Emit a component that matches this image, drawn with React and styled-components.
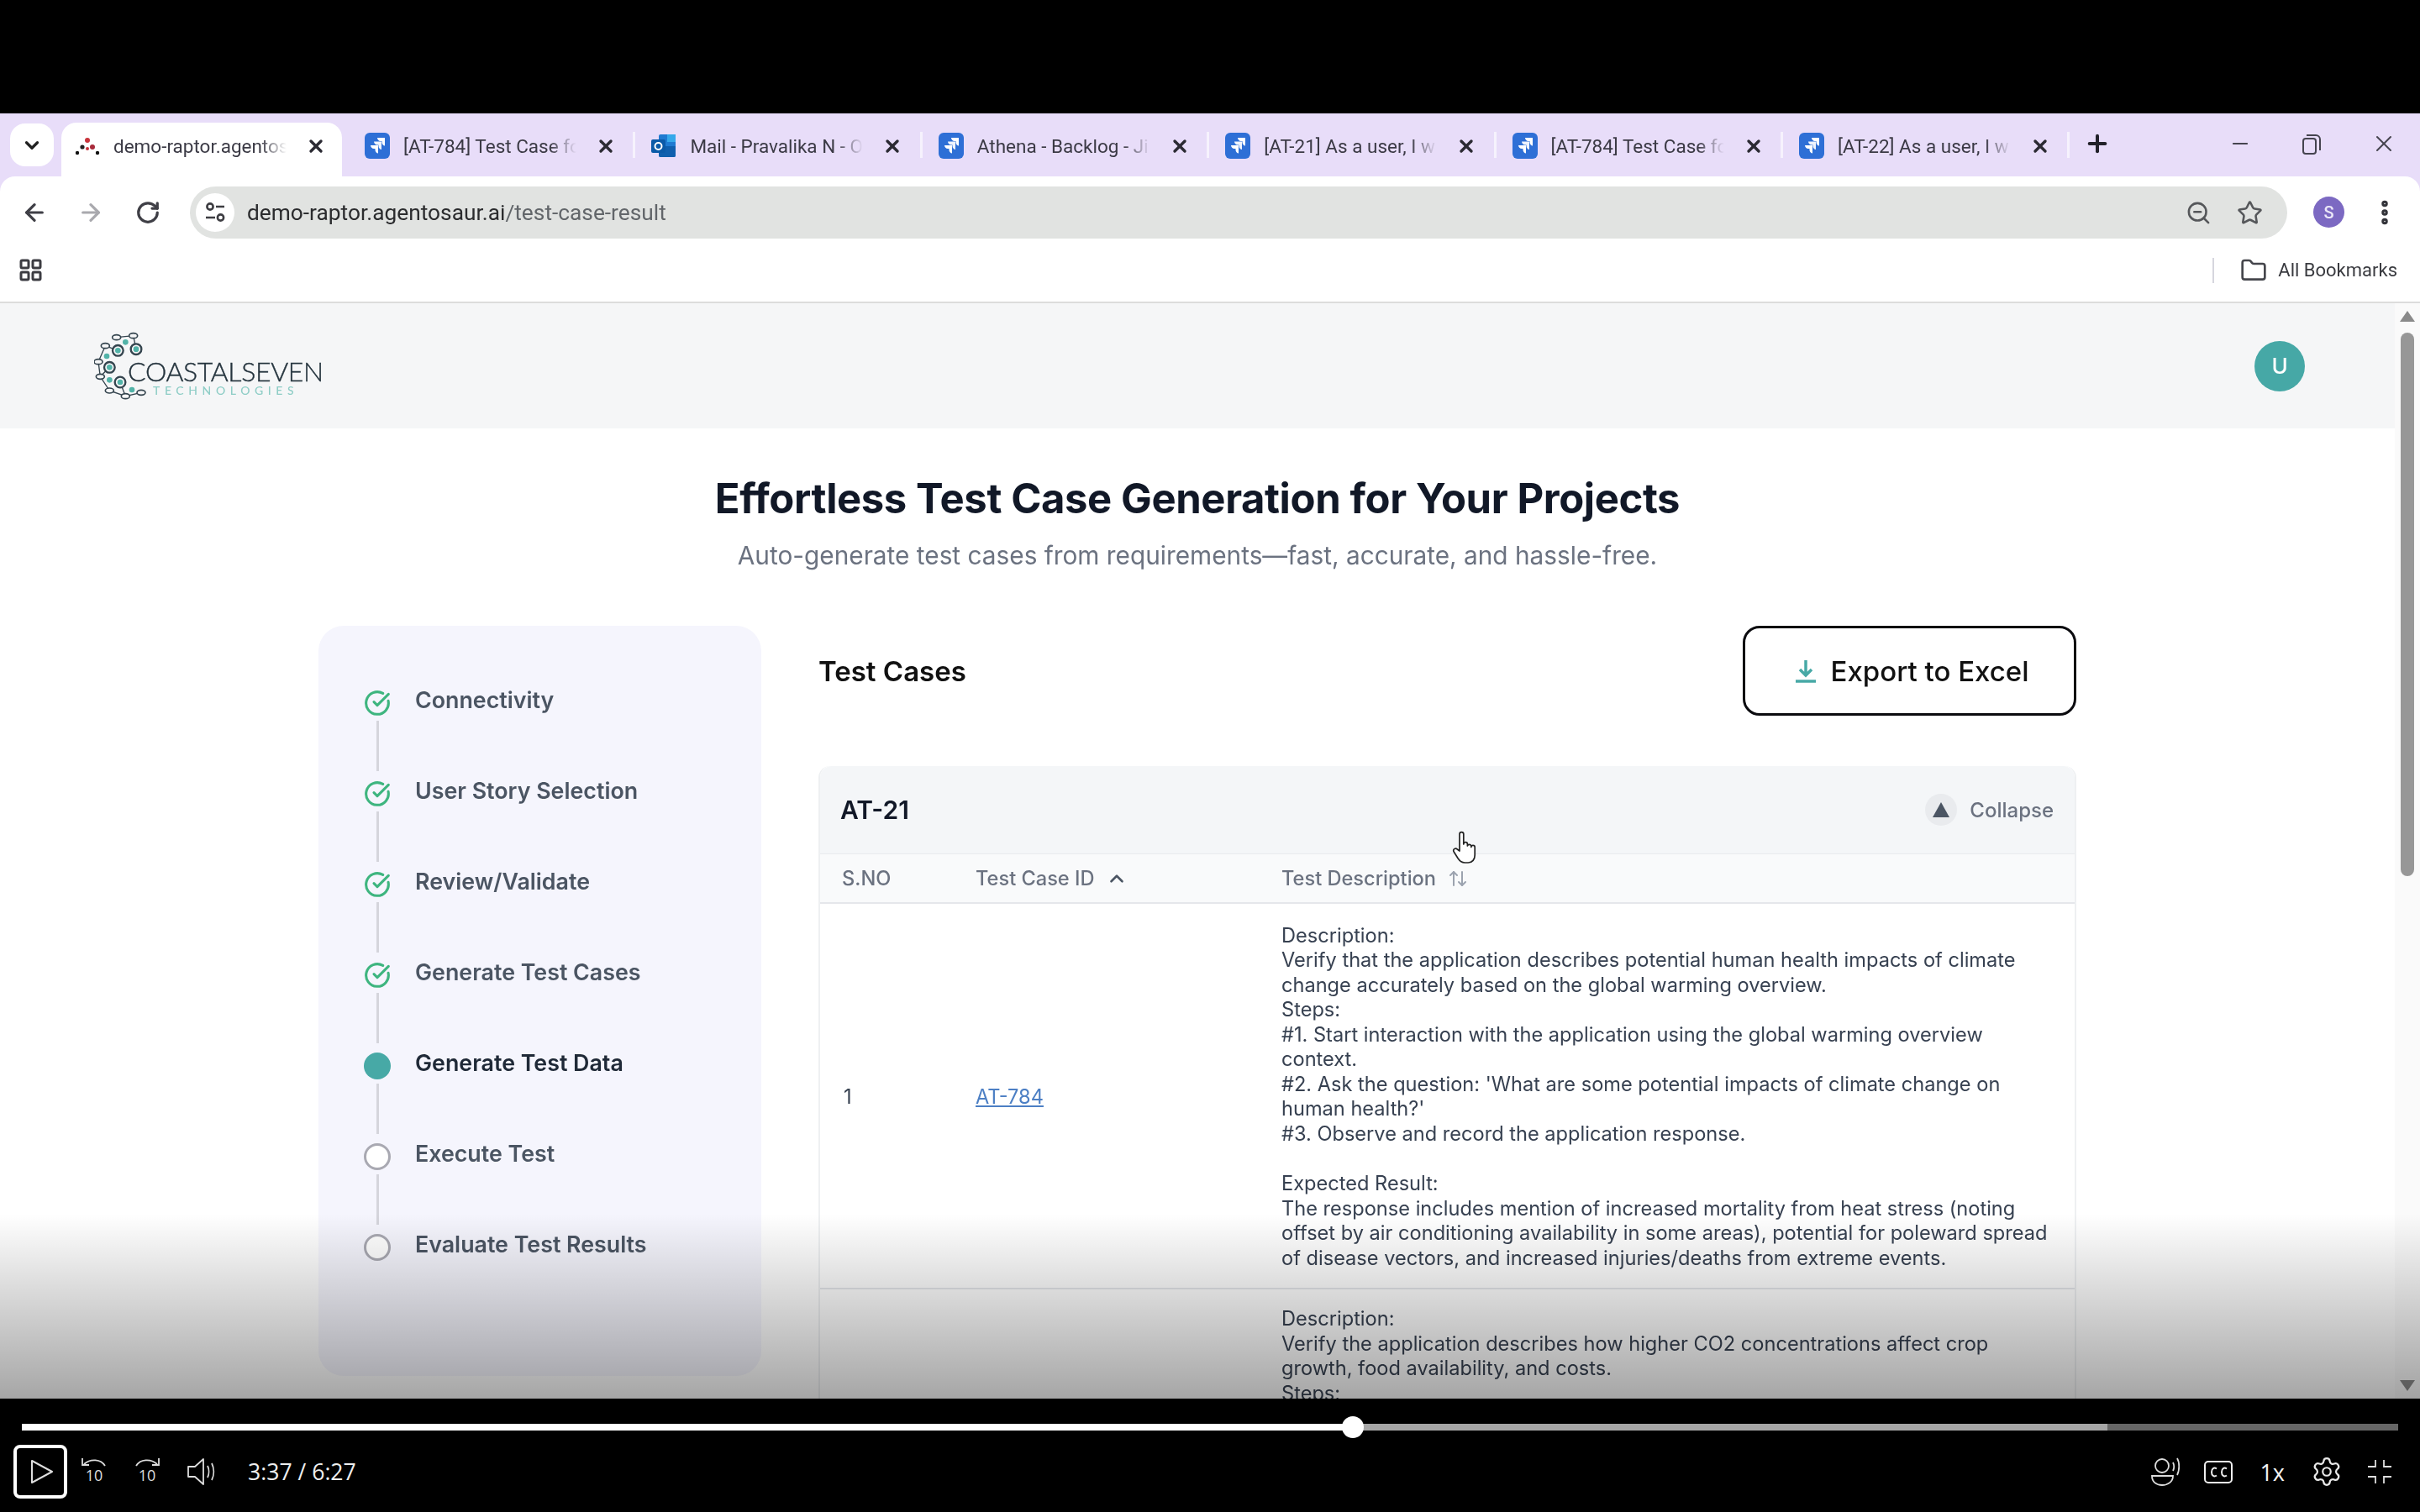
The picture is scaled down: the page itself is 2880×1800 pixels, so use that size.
import React from "react";
import styled, { createGlobalStyle } from "styled-components";
import {
  ArrowLeft,
  ArrowRight,
  ArrowUpDown,
  ChevronDown,
  ChevronUp,
  CircleCheckBig,
  EllipsisVertical,
  Folder,
  Minus,
  Plus,
  RotateCw,
  Settings,
  Star,
  X,
  ZoomOut,
} from "lucide-react";

const Global = createGlobalStyle`
  html, body { margin: 0; padding: 0; background: #000; }
  body { font-family: Inter, "Liberation Sans", sans-serif; overflow: hidden; }
  * { box-sizing: border-box; }
`;

const Screen = styled.div`
  width: 2880px;
  height: 1800px;
  display: flex;
  flex-direction: column;
  background: #000;
  overflow: hidden;
`;

const TopBlack = styled.div`
  height: 135px;
  flex: none;
`;

// the recording is a soft video frame, the player controls on top of it are sharp
const VideoFrame = styled.div`
  flex: none;
  background: #e8ddf9;
  filter: blur(0.6px);
`;

const Strip = styled.div`
  height: 75px;
  display: flex;
  align-items: flex-end;
  background: #e8ddf9;
  padding-left: 12px;
  font-family: Roboto, sans-serif;
`;

const ListBtn = styled.div`
  width: 52px;
  height: 51px;
  margin: 0 9px 12px 0;
  border-radius: 18px;
  background: #fff;
  display: flex;
  align-items: center;
  justify-content: center;
  color: #222;
`;

const Tab = styled.div`
  position: relative;
  flex: none;
  width: ${(p) => (p.$active ? "334px" : "341.4px")};
  height: 64px;
  margin-right: ${(p) => (p.$active ? "8px" : "0")};
  padding: 0 0 9px ${(p) => (p.$active ? "16px" : "19px")};
  display: flex;
  align-items: center;
  gap: 16px;
  background: ${(p) => (p.$active ? "#fff" : "transparent")};
  border-radius: 18px 18px 0 0;
  color: #3b3a45;
  &::after {
    content: "";
    display: ${(p) => (p.$active ? "none" : "block")};
    position: absolute;
    right: 0;
    top: 11px;
    width: 3px;
    height: 31px;
    background: #f6f2fd;
  }
`;

const TabTitle = styled.span`
  width: 208px;
  white-space: nowrap;
  font-size: 22.5px;
  -webkit-mask-image: linear-gradient(to right, #000 84%, transparent 99%);
  mask-image: linear-gradient(to right, #000 84%, transparent 99%);
`;

const TabClose = styled.span`
  display: flex;
  margin-left: 5px;
  color: #2b2a33;
`;

const NewTab = styled.div`
  display: flex;
  align-self: center;
  margin: -4px 0 0 17px;
  color: #22212a;
`;

const WinControls = styled.div`
  margin-left: auto;
  align-self: center;
  display: flex;
  align-items: center;
  gap: 58.5px;
  padding-right: 27px;
  margin-top: -4px;
  color: #45444f;
`;

const Toolbar = styled.div`
  height: 74px;
  background: #fff;
  border-radius: 18px 18px 0 0;
  display: flex;
  align-items: flex-start;
  padding: 12px 23px 0 0;
`;

const NavIcon = styled.div`
  width: ${(p) => p.$w}px;
  height: 62px;
  display: flex;
  align-items: center;
  justify-content: center;
  color: ${(p) => p.$color || "#3f3f46"};
  flex: none;
`;

const Pill = styled.div`
  flex: none;
  width: 2496px;
  height: 62px;
  border-radius: 31px;
  background: #e1e3e1;
  display: flex;
  align-items: center;
  padding: 0 29px 0 7px;
  font-family: Roboto, sans-serif;
`;

const SiteInfo = styled.div`
  width: 46px;
  height: 46px;
  border-radius: 50%;
  background: #fff;
  display: flex;
  align-items: center;
  justify-content: center;
  margin-right: 15px;
`;

const UrlHost = styled.span`
  font-size: 26.3px;
  color: #2b2c2e;
`;

const UrlPath = styled.span`
  font-size: 26.3px;
  color: #62666a;
`;

const PillIcons = styled.div`
  margin-left: auto;
  display: flex;
  align-items: center;
  gap: 30px;
  color: #55575a;
`;

const ProfileDot = styled.div`
  width: 37px;
  height: 37px;
  border-radius: 50%;
  background: #7c69c2;
  color: #ece8f8;
  font: 500 20px Roboto, sans-serif;
  display: flex;
  align-items: center;
  justify-content: center;
  margin-left: 31px;
  margin-top: 12px;
  flex: none;
`;

const ToolMenu = styled.div`
  display: flex;
  margin: 13px 0 0 30px;
  color: #33343a;
`;

const BookmarkBar = styled.div`
  height: 77px;
  background: #fff;
  border-bottom: 2px solid #dcdcdc;
  display: flex;
  align-items: center;
  padding: 0 27px 0 23px;
  font-family: Roboto, sans-serif;
`;

const BookmarkSep = styled.div`
  width: 2px;
  height: 30px;
  background: #d6d6de;
  margin-left: auto;
  margin-right: 31px;
`;

const BookmarkText = styled.span`
  font-size: 22px;
  color: #3a3b40;
  margin-left: 13px;
`;

const PageWrap = styled.div`
  position: relative;
  height: 1304px;
  display: flex;
  background: #fff;
  overflow: hidden;
`;

const Page = styled.div`
  width: 2850px;
  flex: none;
`;

const Header = styled.header`
  height: 149px;
  background: #f5f6f7;
  display: flex;
  align-items: center;
  justify-content: space-between;
  padding: 0 107px 0 112px;
`;

const LogoWrap = styled.div`
  display: flex;
  align-items: flex-start;
`;

const LogoWords = styled.div`
  margin: 31px 0 0 -26px;
  display: flex;
  flex-direction: column;
`;

const LogoMain = styled.span`
  font: 300 32px/32px Lato, sans-serif;
  letter-spacing: -0.35px;
  color: #25343e;
  -webkit-text-stroke: 0.4px #25343e;
`;

const LogoSub = styled.span`
  margin: -1px 0 0 30px;
  font: 500 14px/16px Lato, sans-serif;
  letter-spacing: 5.6px;
  color: #8ecdc6;
`;

const Avatar = styled.div`
  width: 60px;
  height: 60px;
  border-radius: 50%;
  background: #46a8a6;
  color: #fff;
  font-size: 26px;
  font-weight: 500;
  display: flex;
  align-items: center;
  justify-content: center;
`;

const Title = styled.h1`
  margin: 54px 0 0;
  text-align: center;
  font-size: 49px;
  line-height: 60px;
  font-weight: 700;
  letter-spacing: -0.4px;
  color: #111827;
`;

const Subtitle = styled.p`
  margin: 17px 0 0;
  text-align: center;
  font-size: 29.8px;
  line-height: 40px;
  color: #6b7280;
`;

const Columns = styled.div`
  width: 2092px;
  margin: 64px auto 0;
  display: flex;
  gap: 68px;
  align-items: flex-start;
`;

const Sidebar = styled.aside`
  width: 527px;
  height: 893px;
  flex: none;
  background: #f5f5fd;
  border-radius: 30px;
  padding: 71px 0 0 54px;
`;

const Step = styled.div`
  display: flex;
  gap: 29px;
`;

const Rail = styled.div`
  width: 32px;
  padding-top: 5px;
  display: flex;
  flex-direction: column;
  align-items: center;
  flex: none;
`;

const DoneIcon = styled(CircleCheckBig)`
  color: #3eb57f;
  display: block;
`;

const ActiveDot = styled.div`
  width: 32px;
  height: 32px;
  border-radius: 50%;
  background: #47a9a6;
`;

const EmptyDot = styled.div`
  width: 32px;
  height: 32px;
  border-radius: 50%;
  border: 3px solid #a9a9b2;
  background: #fff;
`;

const Connector = styled.div`
  width: 3px;
  height: 60px;
  margin: 5px 0 6px;
  background: #d5d5dc;
`;

const StepLabel = styled.span`
  font-size: 26.8px;
  line-height: 34px;
  font-weight: 600;
  color: ${(p) => (p.$active ? "#1f2937" : "#4b5563")};
`;

const Main = styled.main`
  width: 1497px;
  flex: none;
`;

const MainTop = styled.div`
  display: flex;
  align-items: center;
  justify-content: space-between;
`;

const MainHeading = styled.h2`
  margin: 0;
  font-size: 33px;
  font-weight: 600;
  color: #111;
`;

const ExportBtn = styled.button`
  width: 397px;
  height: 107px;
  background: #fff;
  border: 3px solid #0b0b0f;
  border-radius: 20px;
  padding: 0 0 0 6px;
  display: flex;
  align-items: center;
  justify-content: center;
  gap: 18px;
  font: 500 33px Inter, sans-serif;
  color: #111;
`;

const Card = styled.section`
  margin-top: 60px;
  border: 2px solid #eef0f2;
  border-top: none;
  border-radius: 14px 14px 0 0;
`;

const CardHead = styled.div`
  height: 104px;
  background: #f4f6f8;
  border-radius: 14px 14px 0 0;
  display: flex;
  align-items: center;
  justify-content: space-between;
  padding: 0 25px 0 24px;
`;

const CardTitle = styled.span`
  font-size: 30px;
  font-weight: 600;
  color: #111827;
`;

const CollapseBtn = styled.div`
  display: flex;
  align-items: center;
  gap: 15px;
  font-size: 24px;
  font-weight: 500;
  color: #6b7280;
`;

const CollapseIcon = styled.div`
  width: 38px;
  height: 38px;
  border-radius: 50%;
  background: #e9ebee;
  display: flex;
  align-items: center;
  justify-content: center;
`;

const TableRow = styled.div`
  display: grid;
  grid-template-columns: 185px 364px 1fr;
  align-items: center;
  border-bottom: 2px solid #e5e7eb;
`;

const HeadRow = styled(TableRow)`
  height: 60px;
  background: #f9fafb;
  border-top: 1px solid #e9ebee;
`;

const HeadCell = styled.div`
  padding-left: ${(p) => p.$pad || 0}px;
  display: flex;
  align-items: center;
  gap: 14px;
  font-size: 23.6px;
  font-weight: 500;
  color: #6b7280;
`;

const BodyCell = styled.div`
  padding-left: ${(p) => p.$pad || 0}px;
  padding-top: 2px;
  font-size: 23.6px;
  color: #374151;
`;

const CaseLink = styled.a`
  color: #4c7fc4;
  text-decoration: underline;
`;

const CaseText = styled.div`
  padding: ${(p) => p.$top}px 0 20.5px;
  font-size: 23.6px;
  line-height: 29.55px;
  color: #374151;
  white-space: pre;
`;

const Scrollbar = styled.div`
  width: 30px;
  flex: none;
  display: flex;
  flex-direction: column;
  align-items: center;
  background: #fafafa;
`;

const ScrollArrow = styled.div`
  width: 0;
  height: 0;
  border-left: 9px solid transparent;
  border-right: 9px solid transparent;
  ${(p) => (p.$up ? "border-bottom: 13px solid #8a8a8a;" : "border-top: 13px solid #8a8a8a;")}
  margin-top: ${(p) => p.$top}px;
`;

const ScrollThumb = styled.div`
  width: 16px;
  height: 647px;
  margin-top: 13px;
  border-radius: 8px;
  background: #979797;
`;

const Cursor = styled.div`
  position: absolute;
  left: 1726px;
  top: 628px;
  display: flex;
`;

const Fade = styled.div`
  position: absolute;
  left: 0;
  right: 0;
  bottom: 0;
  height: 220px;
  background: linear-gradient(to bottom, rgba(0, 0, 0, 0), rgba(0, 0, 0, 0.35));
  pointer-events: none;
`;

const Player = styled.div`
  height: 135px;
  flex: none;
  background: #000;
  padding-top: 30px;
  color: #e8e8e8;
`;

const Progress = styled.div`
  position: relative;
  margin-left: 26px;
  width: 2828px;
  height: 8px;
  display: flex;
`;

const Segment = styled.div`
  height: 8px;
  width: ${(p) => p.$w}px;
  background: ${(p) => p.$color};
`;

const Knob = styled.div`
  position: absolute;
  left: 1571px;
  top: -9px;
  width: 26px;
  height: 26px;
  border-radius: 50%;
  background: #fff;
`;

const Controls = styled.div`
  margin-top: 17px;
  padding: 0 33px 0 16px;
  height: 64px;
  display: flex;
  align-items: center;
`;

const PlayBtn = styled.div`
  width: 64px;
  height: 64px;
  border: 4px solid #fff;
  border-radius: 8px;
  padding-left: 3px;
  display: flex;
  align-items: center;
  justify-content: center;
  margin-right: 17px;
`;

const PlayerIcon = styled.div`
  display: flex;
  margin-left: ${(p) => p.$gap || 0}px;
`;

const TimeText = styled.span`
  margin-left: 39px;
  font: 400 26.6px "Open Sans", sans-serif;
  color: #eee;
`;

const SpeedText = styled.span`
  margin-left: 32px;
  font: 400 27px "Open Sans", sans-serif;
  color: #f4f4f4;
`;

const RightControls = styled.div`
  margin-left: auto;
  display: flex;
  align-items: center;
`;

const JiraIcon = () => (
  <svg width="30" height="31" viewBox="0 0 30 31">
    <rect width="30" height="31" rx="6" fill="#2e6fd6" />
    <path d="M24 6H15c0 2.200 1.800 4 4 4h1.500v1.500c0 2.200 1.800 4 3.500 4z" fill="#fff" />
    <path d="M20 10.500h-9c0 2.200 1.800 4 4 4h1.500V16c0 2.200 1.800 4 3.500 4z" fill="#eef3fc" />
    <path d="M16 15H7c0 2.200 1.800 4 4 4h1.500v1.500c0 2.200 1.800 4 3.500 4z" fill="#fff" />
  </svg>
);

const OutlookIcon = () => (
  <svg width="30" height="31" viewBox="0 0 30 31">
    <rect x="9" y="2" width="20" height="27" rx="2" fill="#1f7ad1" />
    <rect x="19" y="2" width="10" height="9" fill="#35a8ea" />
    <path d="M9 16l20 0v11a2 2 0 0 1-2 2H11a2 2 0 0 1-2-2z" fill="#0f5fae" />
    <rect x="0" y="8" width="17" height="16" rx="2" fill="#0a5aa8" />
    <circle cx="8.500" cy="16" r="4" fill="none" stroke="#fff" strokeWidth="2" />
  </svg>
);

const RaptorIcon = () => (
  <svg width="30" height="31" viewBox="0 0 30 31">
    <circle cx="15" cy="9" r="3" fill="#c8343c" />
    <circle cx="9" cy="17" r="2.600" fill="#222" />
    <circle cx="21" cy="17" r="3" fill="#a82a3a" />
    <circle cx="3" cy="24" r="2.200" fill="#111" />
    <circle cx="27" cy="24" r="2.200" fill="#111" />
    <circle cx="15" cy="19" r="2" fill="#c8343c" />
  </svg>
);

const TuneIcon = () => (
  <svg width="24" height="28" viewBox="0 0 24 28" fill="none" stroke="#3d3d42" strokeWidth="2.600">
    <circle cx="6" cy="7" r="3.600" />
    <path d="M13 7h10M1 20h11" />
    <circle cx="18.500" cy="20" r="3.600" />
  </svg>
);

const RestoreIcon = () => (
  <svg width="24" height="26" viewBox="0 0 24 26" fill="none" stroke="#45444f" strokeWidth="2">
    <rect x="2" y="7" width="15" height="18" rx="3" />
    <path d="M6 3h11a5 5 0 0 1 5 5v13" />
  </svg>
);

const AppsIcon = () => (
  <svg width="27" height="27" viewBox="0 0 27 27" fill="none" stroke="#3c3c42" strokeWidth="3">
    <rect x="2" y="2" width="9" height="9" rx="1.500" />
    <rect x="16" y="2" width="9" height="9" rx="1.500" />
    <rect x="2" y="16" width="9" height="9" rx="1.500" />
    <rect x="16" y="16" width="9" height="9" rx="1.500" />
  </svg>
);

// globe mark, coordinates taken from the logo at 3x
const rings = [
  [235, 145],
  [300, 140],
  [205, 205],
  [243, 258],
];
const dots = [
  [262, 115],
  [195, 165],
  [205, 250],
  [285, 285],
];
const ovals = [
  [230, 98],
  [290, 92],
  [190, 128],
  [165, 185],
  [172, 238],
  [205, 288],
  [262, 308],
  [318, 295],
];

const LogoMark = () => (
  <svg width="66" height="82" viewBox="150 78 198 246" fill="none" stroke="#34444e" strokeWidth="6">
    <path d="M230 98L290 92L300 140M190 128L235 145M165 185L190 128M172 238L165 185M205 205L172 238M205 288L172 238M243 258L262 308L318 295M205 288L262 308" strokeWidth="4" />
    {ovals.map(([x, y], i) => (
      <ellipse key={i} cx={x} cy={y} rx="15" ry="9" fill="#f5f6f7" strokeWidth="5" />
    ))}
    {rings.map(([x, y], i) => (
      <g key={i}>
        <circle cx={x} cy={y} r="19" fill="#f5f6f7" strokeWidth="7" />
        <circle cx={x} cy={y} r="10" fill="#52b3a8" stroke="none" />
      </g>
    ))}
    {dots.map(([x, y], i) => (
      <circle key={i} cx={x} cy={y} r="10" fill="#52b3a8" stroke="none" />
    ))}
  </svg>
);

const DownloadIcon = () => (
  <svg width="24" height="28" viewBox="0 0 24 28" fill="none" stroke="#47a9a6" strokeWidth="3.500">
    <path d="M12 1v17M5 12l7 7 7-7" />
    <path d="M0 26h24" />
  </svg>
);

const HandCursor = () => (
  <svg width="34" height="40" viewBox="0 0 34 40" fill="#fff" stroke="#222" strokeWidth="1.700" strokeLinejoin="round">
    <path d="M11 24V4a2.400 2.400 0 0 1 4.800 0v12a2.300 2.300 0 0 1 4.600 0v2a2.300 2.300 0 0 1 4.400 0v1.500a2.200 2.200 0 0 1 4.400 0V29c0 5-3 9-8 9h-4c-4 0-6-2-8-5l-5-8c-1.600-3 2-5 4-3z" />
  </svg>
);

const BackTen = ({ flip }) => (
  <svg width="30" height="34" viewBox="0 0 30 34" fill="none" stroke="#ddd" strokeWidth="1.800">
    <g transform={flip ? "translate(30 0) scale(-1 1)" : undefined}>
      <path d="M28 10C23 2 11 1 3 8" />
      <path d="M1 1v8h8" />
    </g>
    <text x="15" y="28" textAnchor="middle" fontSize="18" fontFamily="Open Sans" fill="#ddd" stroke="none">
      10
    </text>
  </svg>
);

const VolumeIcon = () => (
  <svg width="33" height="32" viewBox="0 0 33 32" fill="none" stroke="#ddd" strokeWidth="1.800" strokeLinejoin="round">
    <path d="M1 10h8L19 1v30L9 22H1z" />
    <path d="M24 9c2 4 2 10 0 14M29 6c3 6 3 14 0 20" />
  </svg>
);

const SpeakerIcon = () => (
  <svg width="34" height="34" viewBox="0 0 34 34" fill="none" stroke="#ddd" strokeWidth="1.800">
    <circle cx="13" cy="10" r="8" />
    <path d="M1 22h25c0 7-6 11-13 11S1 29 1 22z" />
    <path d="M26 6c1.500 3 1.500 7 0 10M31 1c3 5 3 14 0 20" />
  </svg>
);

const CcIcon = () => (
  <svg width="34" height="27" viewBox="0 0 34 27" fill="none" stroke="#eee" strokeWidth="2">
    <rect x="1" y="1" width="32" height="25" rx="4" />
    <path d="M15 9.500c-3-2-6-.5-6 4s3 6 6 4M27 9.500c-3-2-6-.5-6 4s3 6 6 4" />
  </svg>
);

const FullscreenIcon = () => (
  <svg width="30" height="30" viewBox="0 0 30 30" fill="none" stroke="#ddd" strokeWidth="1.800">
    <path d="M10 1v8H1M20 1v8h9M10 29v-8H1M20 29v-8h9" />
  </svg>
);

const tabs = [
  { title: "[AT-784] Test Case fo", icon: <JiraIcon /> },
  { title: "Mail - Pravalika N - O", icon: <OutlookIcon /> },
  { title: "Athena - Backlog - Ji", icon: <JiraIcon /> },
  { title: "[AT-21] As a user, I w", icon: <JiraIcon /> },
  { title: "[AT-784] Test Case fo", icon: <JiraIcon /> },
  { title: "[AT-22] As a user, I w", icon: <JiraIcon /> },
];

const steps = [
  { label: "Connectivity", state: "done" },
  { label: "User Story Selection", state: "done" },
  { label: "Review/Validate", state: "done" },
  { label: "Generate Test Cases", state: "done" },
  { label: "Generate Test Data", state: "active" },
  { label: "Execute Test", state: "todo" },
  { label: "Evaluate Test Results", state: "todo" },
];

const firstCase = `Description:
Verify that the application describes potential human health impacts of climate
change accurately based on the global warming overview.
Steps:
#1. Start interaction with the application using the global warming overview
context.
#2. Ask the question: 'What are some potential impacts of climate change on
human health?'
#3. Observe and record the application response.

Expected Result:
The response includes mention of increased mortality from heat stress (noting
offset by air conditioning availability in some areas), potential for poleward spread
of disease vectors, and increased injuries/deaths from extreme events.`;

const secondCase = `Description:
Verify the application describes how higher CO2 concentrations affect crop
growth, food availability, and costs.
Steps:`;

export default function App() {
  return (
    <Screen>
      <Global />
      <TopBlack />
      <VideoFrame>
        <Strip>
          <ListBtn>
            <ChevronDown size={26} strokeWidth={3} />
          </ListBtn>
          <Tab $active>
            <RaptorIcon />
            <TabTitle>demo-raptor.agentos</TabTitle>
            <TabClose>
              <X size={24} strokeWidth={3.4} />
            </TabClose>
          </Tab>
          {tabs.map((t, i) => (
            <Tab key={i}>
              {t.icon}
              <TabTitle>{t.title}</TabTitle>
              <TabClose>
                <X size={24} strokeWidth={3.4} />
              </TabClose>
            </Tab>
          ))}
          <NewTab>
            <Plus size={32} strokeWidth={3} />
          </NewTab>
          <WinControls>
            <Minus size={28} strokeWidth={1.6} />
            <RestoreIcon />
            <X size={32} strokeWidth={1.5} />
          </WinControls>
        </Strip>
        <Toolbar>
          <NavIcon $w={82}>
            <ArrowLeft size={32} strokeWidth={2.4} />
          </NavIcon>
          <NavIcon $w={52} $color="#a9a9ae">
            <ArrowRight size={32} strokeWidth={2.4} />
          </NavIcon>
          <NavIcon $w={84}>
            <RotateCw size={30} strokeWidth={2.6} />
          </NavIcon>
          <NavIcon $w={8} />
          <Pill>
            <SiteInfo>
              <TuneIcon />
            </SiteInfo>
            <UrlHost>demo-raptor.agentosaur.ai</UrlHost>
            <UrlPath>/test-case-result</UrlPath>
            <PillIcons>
              <ZoomOut size={31} strokeWidth={2} />
              <Star size={31} strokeWidth={2} />
            </PillIcons>
          </Pill>
          <ProfileDot>S</ProfileDot>
          <ToolMenu>
            <EllipsisVertical size={36} strokeWidth={3} />
          </ToolMenu>
        </Toolbar>
        <BookmarkBar>
          <AppsIcon />
          <BookmarkSep />
          <Folder size={32} strokeWidth={2} color="#45464c" />
          <BookmarkText>All Bookmarks</BookmarkText>
        </BookmarkBar>
        <PageWrap>
          <Page>
            <Header>
              <LogoWrap>
                <LogoMark />
                <LogoWords>
                  <LogoMain>COASTALSEVEN</LogoMain>
                  <LogoSub>TECHNOLOGIES</LogoSub>
                </LogoWords>
              </LogoWrap>
              <Avatar>U</Avatar>
            </Header>
            <Title>Effortless Test Case Generation for Your Projects</Title>
            <Subtitle>Auto-generate test cases from requirements—fast, accurate, and hassle-free.</Subtitle>
            <Columns>
              <Sidebar>
                {steps.map((s, i) => (
                  <Step key={s.label}>
                    <Rail>
                      {s.state === "done" && <DoneIcon size={32} strokeWidth={2.3} />}
                      {s.state === "active" && <ActiveDot />}
                      {s.state === "todo" && <EmptyDot />}
                      {i < steps.length - 1 && <Connector />}
                    </Rail>
                    <StepLabel $active={s.state === "active"}>{s.label}</StepLabel>
                  </Step>
                ))}
              </Sidebar>
              <Main>
                <MainTop>
                  <MainHeading>Test Cases</MainHeading>
                  <ExportBtn>
                    <DownloadIcon />
                    Export to Excel
                  </ExportBtn>
                </MainTop>
                <Card>
                  <CardHead>
                    <CardTitle>AT-21</CardTitle>
                    <CollapseBtn>
                      <CollapseIcon>
                        <svg width="20" height="18" viewBox="0 0 20 18">
                          <path d="M10 0l10 18H0z" fill="#4b5563" />
                        </svg>
                      </CollapseIcon>
                      Collapse
                    </CollapseBtn>
                  </CardHead>
                  <HeadRow>
                    <HeadCell $pad={26}>S.NO</HeadCell>
                    <HeadCell>
                      Test Case ID
                      <ChevronUp size={26} strokeWidth={2.4} color="#4b5563" />
                    </HeadCell>
                    <HeadCell>
                      Test Description
                      <ArrowUpDown size={24} strokeWidth={2} color="#9ca3af" />
                    </HeadCell>
                  </HeadRow>
                  <TableRow>
                    <BodyCell $pad={28}>1</BodyCell>
                    <BodyCell>
                      <CaseLink>AT-784</CaseLink>
                    </BodyCell>
                    <CaseText $top={22.5}>{firstCase}</CaseText>
                  </TableRow>
                  <TableRow>
                    <BodyCell />
                    <BodyCell />
                    <CaseText $top={20.5}>{secondCase}</CaseText>
                  </TableRow>
                </Card>
              </Main>
            </Columns>
          </Page>
          <Scrollbar>
            <ScrollArrow $up $top={9} />
            <ScrollThumb />
            <ScrollArrow $top={600} />
          </Scrollbar>
          <Cursor>
            <HandCursor />
          </Cursor>
          <Fade />
        </PageWrap>
      </VideoFrame>
      <Player>
        <Progress>
          <Segment $w={1583} $color="#fff" />
          <Segment $w={899} $color="#a6a6a6" />
          <Segment $w={346} $color="#666" />
          <Knob />
        </Progress>
        <Controls>
          <PlayBtn>
            <svg width="28" height="30" viewBox="0 0 28 30" fill="none" stroke="#ddd" strokeWidth="2" strokeLinejoin="round">
              <path d="M2 2l24 13L2 28z" />
            </svg>
          </PlayBtn>
          <PlayerIcon>
            <BackTen />
          </PlayerIcon>
          <PlayerIcon $gap={33}>
            <BackTen flip />
          </PlayerIcon>
          <PlayerIcon $gap={33}>
            <VolumeIcon />
          </PlayerIcon>
          <TimeText>3:37 / 6:27</TimeText>
          <RightControls>
            <SpeakerIcon />
            <PlayerIcon $gap={29}>
              <CcIcon />
            </PlayerIcon>
            <SpeedText>1x</SpeedText>
            <PlayerIcon $gap={31}>
              <Settings size={38} strokeWidth={1.4} />
            </PlayerIcon>
            <PlayerIcon $gap={29}>
              <FullscreenIcon />
            </PlayerIcon>
          </RightControls>
        </Controls>
      </Player>
    </Screen>
  );
}
